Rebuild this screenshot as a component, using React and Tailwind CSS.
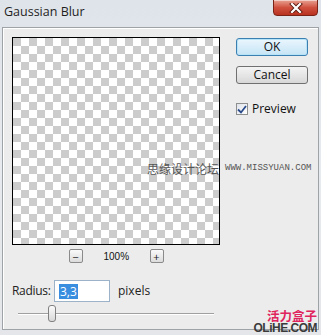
import React from "react";

function CloseButton() {
  return (
    <div className="w-[45px] h-[17px] mt-[-1px] rounded-b-[4px] border border-[#7a2418] bg-gradient-to-b from-[#e7a193] via-[#d0503f] to-[#b8321f] flex items-center justify-center shadow-[inset_0_1px_0_rgba(255,255,255,0.5)]">
      <svg width="14" height="10" viewBox="0 0 14 10">
        <path d="M3 1 L11 9 M11 1 L3 9" stroke="#5a1a10" strokeWidth="4" strokeLinecap="square" />
        <path d="M3 1 L11 9 M11 1 L3 9" stroke="#ffffff" strokeWidth="2.2" strokeLinecap="square" />
      </svg>
    </div>
  );
}

function SmallButton({ children }) {
  return (
    <div className="w-[14px] h-[14px] rounded-[2px] border border-[#8a8a8a] bg-gradient-to-b from-[#fafafa] to-[#dcdcdc] flex items-center justify-center text-[11px] leading-none text-[#222]">
      {children}
    </div>
  );
}

export default function App() {
  return (
    <div
      className="relative w-[321px] h-[335px] overflow-hidden bg-gradient-to-b from-[#dfe4ea] via-[#e7eaee] to-[#e4e6e9] flex flex-col"
      style={{ fontFamily: "'Open Sans', 'Liberation Sans', sans-serif" }}
    >
      {/* title bar */}
      <div className="h-[27px] flex items-start justify-between pl-[4px] pr-[3px]">
        <div className="text-[12.5px] text-[#1e1e1e] mt-[3px]">Gaussian Blur</div>
        <CloseButton />
      </div>

      {/* content panel */}
      <div className="mx-[2px] mb-[5px] flex-1 border border-[#9ea3a8] bg-[#ececec] flex pl-[9px] pt-[9px] shadow-[inset_1px_1px_0_#ffffff]">
        <div className="flex flex-col w-[208px]">
          <div
            className="w-[208px] h-[208px] border border-black bg-white"
            style={{
              backgroundImage:
                "linear-gradient(45deg, #cccccc 25%, transparent 25%, transparent 75%, #cccccc 75%), linear-gradient(45deg, #cccccc 25%, transparent 25%, transparent 75%, #cccccc 75%)",
              backgroundSize: "16px 16px",
              backgroundPosition: "8px 0, 0 8px",
            }}
          />
          <div className="mt-[4px] flex items-center justify-center gap-[21px] h-[14px]">
            <SmallButton>−</SmallButton>
            <div
              className="text-[10px] text-[#111] w-[25px] text-center"
              style={{ fontFamily: "'Liberation Sans', sans-serif" }}
            >
              100%
            </div>
            <SmallButton>+</SmallButton>
          </div>
          <div className="mt-[17px] flex items-center h-[22px] text-[12px] text-[#222]">
            <span className="w-[42px] tracking-[-0.3px]">Radius:</span>
            <div className="w-[56px] h-[22px] border border-[#9cb2c8] bg-white flex items-center pl-[4px]">
              <span className="bg-[#3a8ee0] text-white px-[1px] leading-[15px]">3,3</span>
            </div>
            <span className="ml-[8px]">pixels</span>
          </div>
          <div className="relative mt-[3px] h-[17px] ml-[6px] w-[196px] flex items-center">
            <div className="w-full h-[2px] border-t border-[#a0a0a0] border-b border-b-white" />
            <div className="absolute left-[30px] top-0 w-[8px] h-[17px] rounded-[3px] border border-[#808080] bg-gradient-to-b from-[#fbfbfb] to-[#d8d8d8]" />
          </div>
        </div>

        <div className="ml-[16px] flex flex-col w-[72px]">
          <div className="mt-[1px] h-[18px] rounded-[3px] border border-[#3c7fb1] bg-gradient-to-b from-[#eaf6fd] to-[#c6e4f5] shadow-[inset_0_0_0_1px_#b6e3f8] flex items-center justify-center text-[12px] text-[#111]">
            OK
          </div>
          <div className="mt-[10px] h-[18px] rounded-[3px] border border-[#707070] bg-gradient-to-b from-[#f4f4f4] to-[#d8d8d8] flex items-center justify-center text-[12px] text-[#111]">
            Cancel
          </div>
          <div className="mt-[16px] flex items-center text-[12px] text-[#111]">
            <div className="w-[12px] h-[12px] border border-[#8e8f8f] bg-gradient-to-br from-[#dfe3ea] to-white flex items-center justify-center">
              <svg width="10" height="9" viewBox="0 0 10 9">
                <path d="M1 4.5 L4 7.5 L9 1" stroke="#2a4a8a" strokeWidth="1.8" fill="none" />
              </svg>
            </div>
            <span className="ml-[4px]">Preview</span>
          </div>
        </div>
      </div>

      {/* watermarks */}
      <div className="absolute left-[147px] top-[160px] flex items-center gap-[6px]">
        <span
          className="text-[12px] text-[#555]"
          style={{ fontFamily: "'Noto Sans CJK SC', sans-serif" }}
        >
          思缘设计论坛
        </span>
        <span
          className="text-[9px] text-[#555]"
          style={{ fontFamily: "'Liberation Mono', monospace" }}
        >
          WWW.MISSYUAN.COM
        </span>
      </div>
      <div className="absolute right-[4px] top-[309px] flex flex-col items-end">
        <span
          className="text-[12.5px] leading-[13px] font-bold text-[#e0245e]"
          style={{ fontFamily: "'Noto Sans CJK SC', sans-serif" }}
        >
          活力盒子
        </span>
        <span
          className="text-[12px] leading-[13px] font-bold text-[#3a3a3a] tracking-[-0.5px]"
          style={{ fontFamily: "'Liberation Sans', sans-serif" }}
        >
          OLiHE.COM
        </span>
      </div>
    </div>
  );
}
